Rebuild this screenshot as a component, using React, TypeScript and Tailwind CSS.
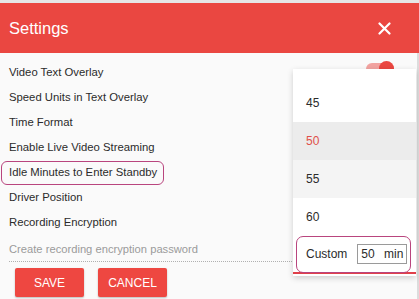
import React from "react";

export default function App() {
  const rows = [
    "Video Text Overlay",
    "Speed Units in Text Overlay",
    "Time Format",
    "Enable Live Video Streaming",
    "Idle Minutes to Enter Standby",
    "Driver Position",
    "Recording Encryption",
  ];
  return (
    <div
      className="relative w-[419px] h-[299px] overflow-hidden bg-[#e6e6e6] pt-[3px]"
      style={{ fontFamily: '"Liberation Sans", Arial, sans-serif' }}
    >
      <div className="h-[50px] bg-[#ea4741] flex items-center justify-between pl-[9px] pr-[28px]">
        <span className="text-white text-[16.5px] leading-none">Settings</span>
        <svg width="13" height="13" viewBox="0 0 13 13">
          <path d="M1.5 1.5 L11.5 11.5 M11.5 1.5 L1.5 11.5" stroke="white" strokeWidth="2.2" strokeLinecap="round" />
        </svg>
      </div>
      <div className="h-[246px] bg-[#fafafa] border-r-[2px] border-[#dcdcdc] pt-[7px]">
        <div className="flex flex-col">
          {rows.map((r, i) => (
            <div key={r} className="h-[25px] flex items-center pl-[9px]">
              {i === 4 ? (
                <div className="-ml-[8px] w-[163px] h-[24px] border border-[#b9457e] rounded-[6px] flex items-center pl-[7px] text-[11.3px] text-[#2b2b2b] whitespace-nowrap">
                  {r}
                </div>
              ) : (
                <span className="text-[11.3px] text-[#2b2b2b] whitespace-nowrap">{r}</span>
              )}
            </div>
          ))}
        </div>
        <div className="ml-[9px] w-[283px] h-[27px] flex items-center border-b border-dotted border-[#b0b0b0] pt-[3px]">
          <span className="text-[11.2px] text-[#9b9b9b] whitespace-nowrap">Create recording encryption password</span>
        </div>
        <div className="flex gap-[14px] pl-[15px] pt-[6px]">
          <button className="w-[69px] h-[29px] bg-[#ee4741] text-white text-[12px] rounded-[2px] shadow-[0_1px_2px_rgba(0,0,0,0.25)]">SAVE</button>
          <button className="w-[69px] h-[29px] bg-[#ee4741] text-white text-[12px] rounded-[2px] shadow-[0_1px_2px_rgba(0,0,0,0.25)]">CANCEL</button>
        </div>
      </div>

      {/* toggle (partly hidden) */}
      <div className="absolute left-[366px] top-[63px] w-[28px] h-[12px] rounded-full bg-[#f2a3a0]" />
      <div className="absolute left-[379px] top-[61px] w-[15px] h-[15px] rounded-full bg-[#ea4741]" />

      {/* dropdown */}
      <div className="absolute left-[293px] top-[69px] w-[123px] h-[207px] bg-white shadow-[0_2px_6px_rgba(0,0,0,0.18)] pt-[15px] text-[12px] text-[#2b2b2b]">
        <div className="h-[38px] flex items-center pl-[13px]">45</div>
        <div className="h-[38px] flex items-center pl-[13px] bg-[#ececec] text-[#e0504a]">50</div>
        <div className="h-[38px] flex items-center pl-[13px] bg-[#f4f4f4]">55</div>
        <div className="h-[38px] flex items-center pl-[13px]">60</div>
        <div className="h-[38px] flex items-center pl-[3px] border-b-[2px] border-[#e0404a]">
          <div className="w-[115px] h-[37px] border border-[#b9457e] rounded-[7px] flex items-center pl-[9px] gap-[10px]">
            <span>Custom</span>
            <div className="w-[50px] h-[20px] border border-[#9a9a9a] bg-white flex items-center justify-between px-[3px]">
              <span>50</span>
              <span>min</span>
            </div>
          </div>
        </div>
      </div>
    </div>
  );
}
